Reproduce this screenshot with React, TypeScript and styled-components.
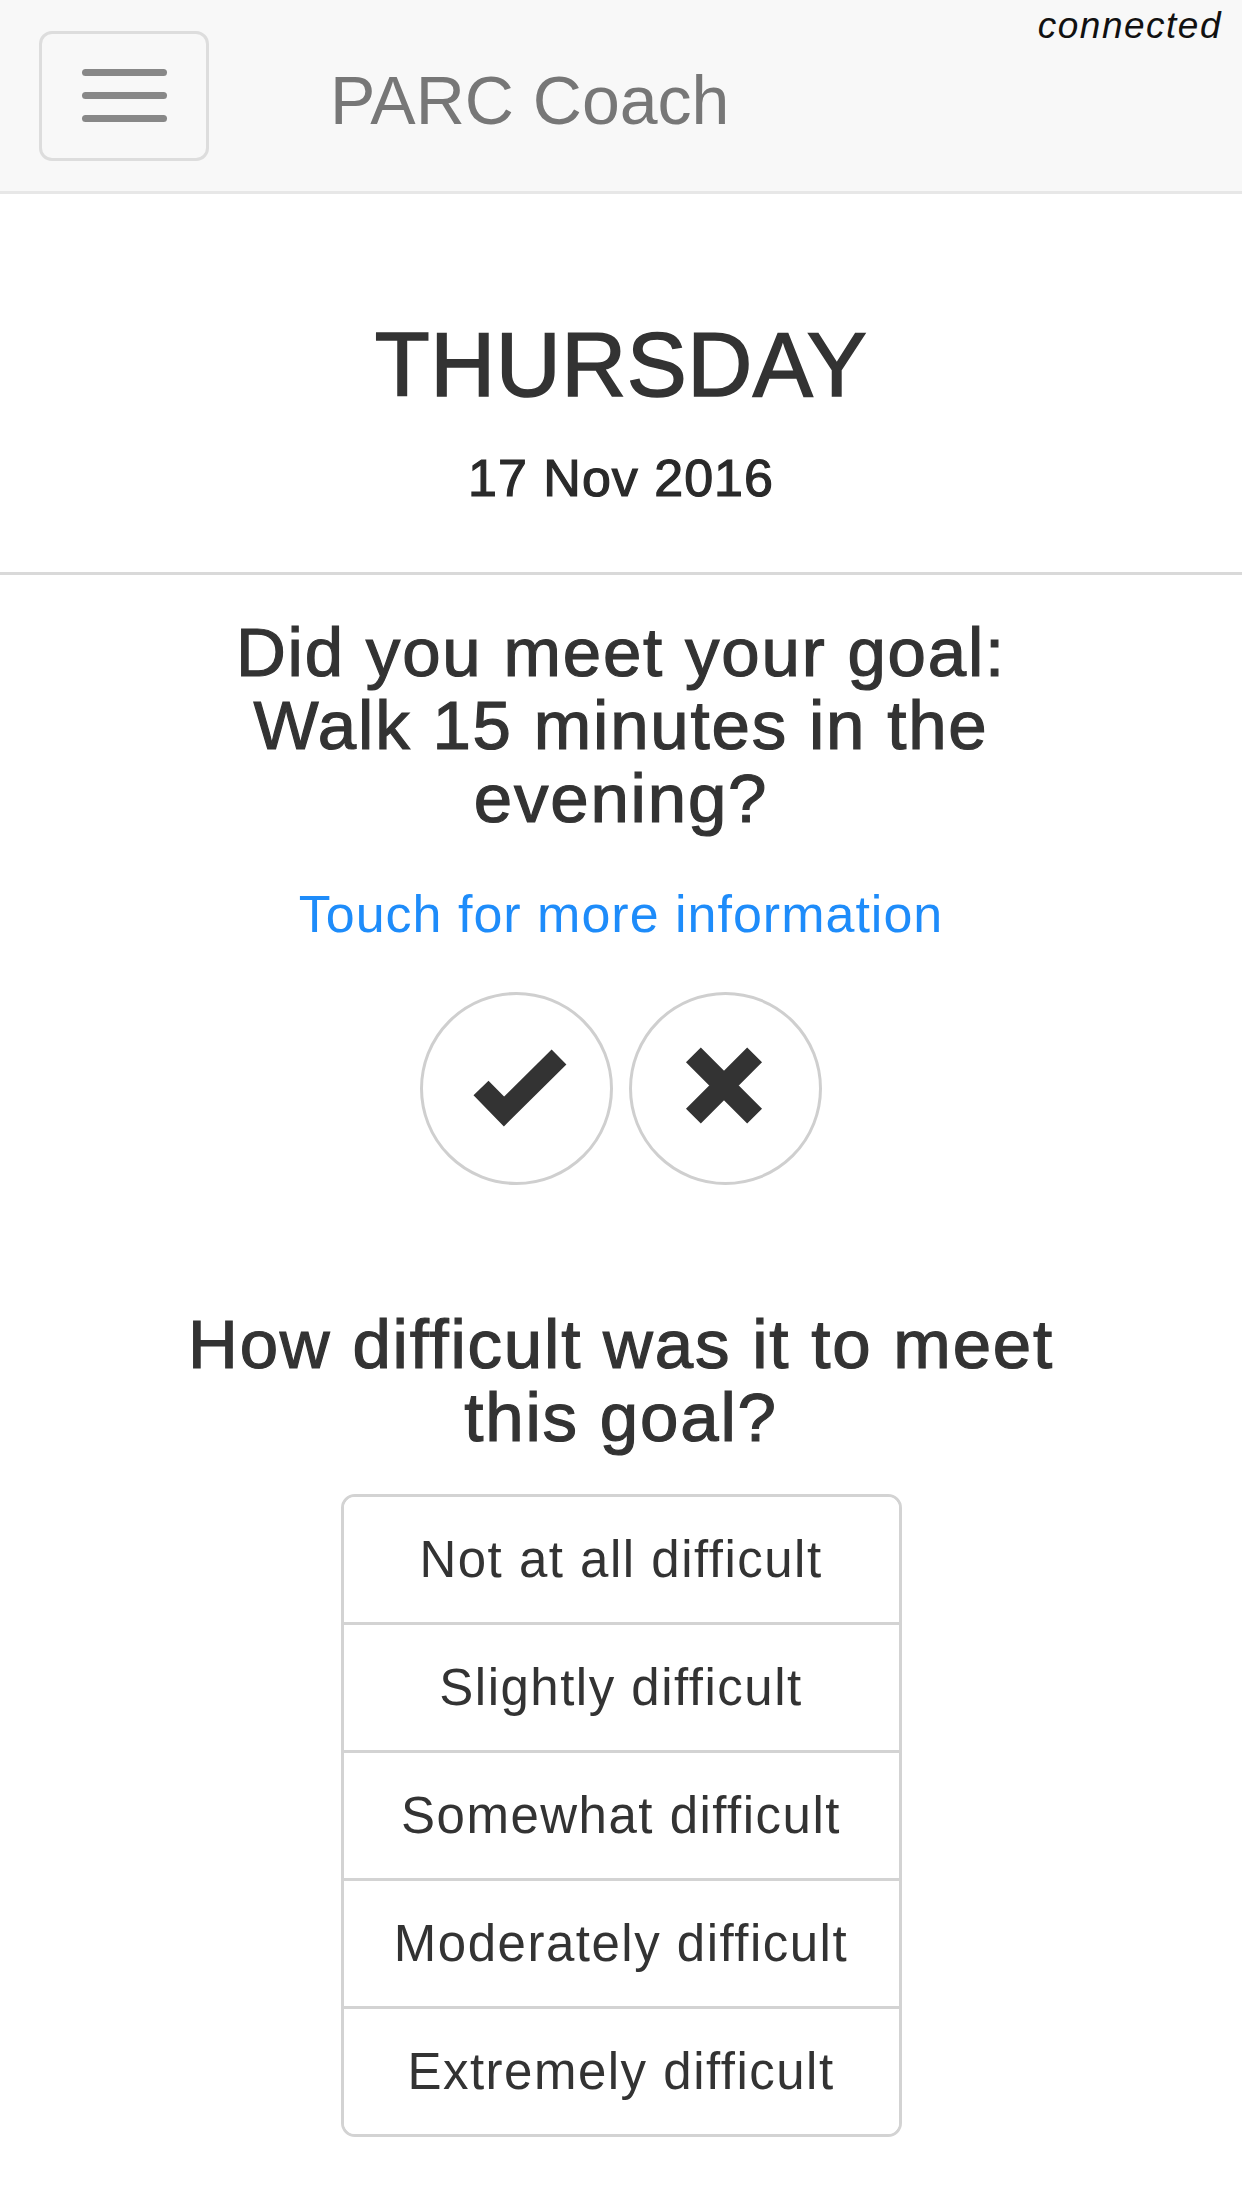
import { createGlobalStyle, styled } from "styled-components";

const GlobalStyle = createGlobalStyle`
  html, body {
    margin: 0;
    padding: 0;
    background: #fff;
  }
  body {
    font-family: "Liberation Sans", Arial, sans-serif;
    color: #333;
  }
`;

const difficulties = [
  "Not at all difficult",
  "Slightly difficult",
  "Somewhat difficult",
  "Moderately difficult",
  "Extremely difficult",
];

const App = () => {
  return (
    <>
      <GlobalStyle />
      <Navbar>
        <MenuToggle type="button" aria-label="menu">
          <MenuBar />
          <MenuBar />
          <MenuBar />
        </MenuToggle>
        <Brand>PARC Coach</Brand>
        <Status>connected</Status>
      </Navbar>
      <Page>
        <DayName>THURSDAY</DayName>
        <DateLine>17 Nov 2016</DateLine>
        <Divider />
        <Content>
          <Heading $top={41}>
            Did you meet your goal:
            <br />
            Walk 15 minutes in the evening?
          </Heading>
          <InfoLink href="#">Touch for more information</InfoLink>
          <AnswerRow>
            <AnswerButton type="button" aria-label="yes">
              <svg width="187" height="187" viewBox="0 0 187 187">
                <polyline
                  points="58,93 81,116.5 136,62"
                  fill="none"
                  stroke="#333"
                  strokeWidth="21"
                  strokeLinejoin="miter"
                />
              </svg>
            </AnswerButton>
            <AnswerButton type="button" aria-label="no">
              <svg width="187" height="187" viewBox="0 0 187 187">
                <path
                  d="M61.4 59.9 L122.6 121.1 M122.6 59.9 L61.4 121.1"
                  fill="none"
                  stroke="#333"
                  strokeWidth="21"
                />
              </svg>
            </AnswerButton>
          </AnswerRow>
          <Heading $top={123}>How difficult was it to meet this goal?</Heading>
          <OptionList>
            {difficulties.map((label) => (
              <OptionItem key={label} type="button">
                {label}
              </OptionItem>
            ))}
          </OptionList>
        </Content>
      </Page>
    </>
  );
};

const Navbar = styled.header`
  position: relative;
  height: 191px;
  display: flex;
  align-items: center;
  padding-left: 39px;
  background: #f8f8f8;
  border-bottom: 3px solid #e7e7e7;
`;

const MenuToggle = styled.button`
  width: 170px;
  height: 130px;
  box-sizing: border-box;
  border: 3px solid #ddd;
  border-radius: 13px;
  background: transparent;
  padding: 0;
  display: flex;
  flex-direction: column;
  align-items: center;
  justify-content: center;
  gap: 16px;
`;

const MenuBar = styled.span`
  display: block;
  width: 85px;
  height: 7px;
  border-radius: 4px;
  background: #888;
`;

const Brand = styled.span`
  align-self: flex-start;
  margin-top: 66px;
  margin-left: 121px;
  font-size: 68px;
  line-height: 68px;
  color: #777;
`;

const Status = styled.span`
  position: absolute;
  top: 7px;
  right: 20px;
  font-size: 37px;
  line-height: 37px;
  font-style: italic;
  letter-spacing: 1.5px;
  color: #111;
`;

const Page = styled.main`
  padding-top: 126px;
  padding-bottom: 60px;
  text-align: center;
`;

const DayName = styled.h1`
  margin: 0;
  font-size: 90px;
  line-height: 90px;
  font-weight: 400;
  letter-spacing: 0.5px;
  color: #333;
  -webkit-text-stroke: 1.6px #333;
`;

const DateLine = styled.h4`
  margin: 42px 0 0;
  font-size: 52px;
  line-height: 53px;
  font-weight: 400;
  letter-spacing: 1px;
  color: #2a2a2a;
  -webkit-text-stroke: 1.2px #2a2a2a;
`;

const Divider = styled.hr`
  margin: 67px 0 0;
  height: 3px;
  border: none;
  background: #d9d9d9;
`;

const Content = styled.section`
  max-width: 960px;
  margin: 0 auto;
  display: flex;
  flex-direction: column;
  align-items: center;
`;

const Heading = styled.h3<{ $top: number }>`
  margin: ${(p) => p.$top}px 0 0;
  font-size: 69px;
  line-height: 73px;
  font-weight: 400;
  letter-spacing: 1.8px;
  color: #333;
  -webkit-text-stroke: 1.2px #333;
`;

const InfoLink = styled.a`
  margin-top: 49px;
  font-size: 52px;
  line-height: 60px;
  letter-spacing: 1px;
  color: #1e8cfa;
  text-decoration: none;
`;

const AnswerRow = styled.div`
  margin-top: 48px;
  display: flex;
  gap: 16px;
`;

const AnswerButton = styled.button`
  width: 193px;
  height: 193px;
  box-sizing: border-box;
  padding: 0;
  border: 3px solid #cfcfcf;
  border-radius: 50%;
  background: #fff;
  display: flex;
  align-items: center;
  justify-content: center;
`;

const OptionList = styled.div`
  margin-top: 40px;
  width: 561px;
  box-sizing: border-box;
  border: 3px solid #d3d3d3;
  border-radius: 14px;
  overflow: hidden;
  display: flex;
  flex-direction: column;
`;

const OptionItem = styled.button`
  box-sizing: content-box;
  height: 125px;
  padding: 0;
  border: none;
  border-top: 3px solid #d3d3d3;
  background: #fff;
  font-family: "Liberation Sans", Arial, sans-serif;
  font-size: 51px;
  line-height: 125px;
  letter-spacing: 1.5px;
  color: #333;

  &:first-child {
    border-top: none;
  }
`;

export default App;
